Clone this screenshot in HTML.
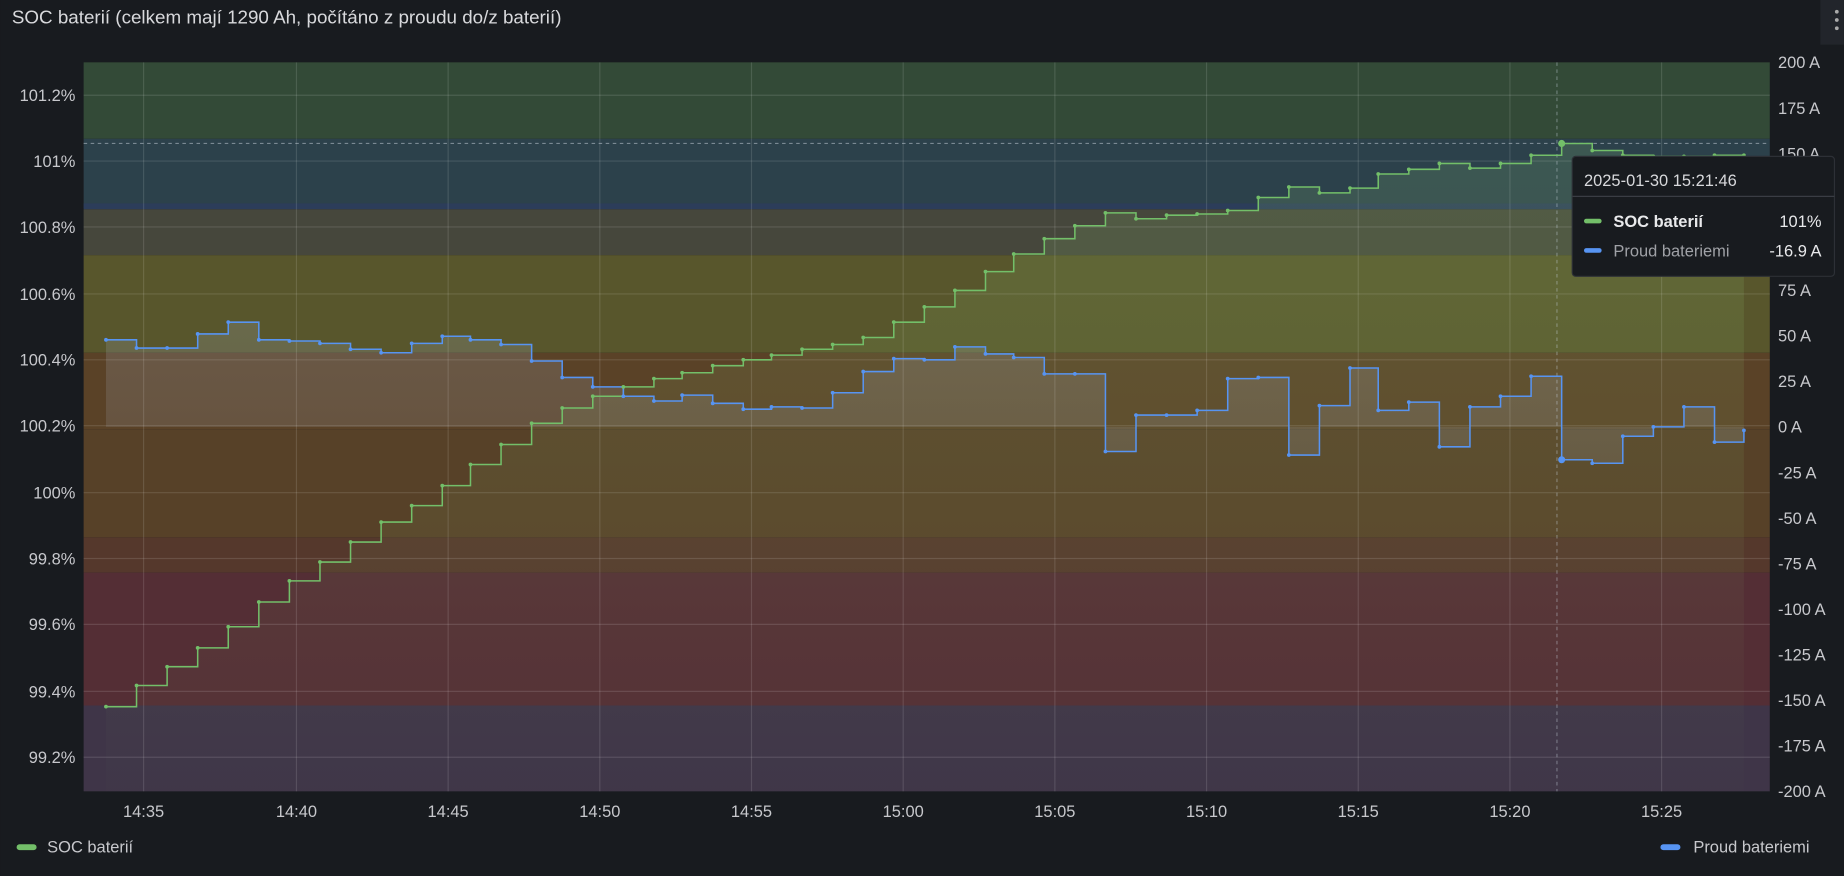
<!DOCTYPE html>
<html><head><meta charset="utf-8"><style>
html,body{margin:0;padding:0;background:#181b1f;}
svg{display:block;}
text{font-family:"Liberation Sans",sans-serif;}
</style></head><body>
<svg id="s" width="1844" height="876" viewBox="0 0 1568 745" xmlns="http://www.w3.org/2000/svg">
<defs>
<linearGradient id="gg" gradientUnits="userSpaceOnUse" x1="0" y1="120" x2="0" y2="673"><stop offset="0" stop-color="rgb(150,210,120)" stop-opacity="0.16"/><stop offset="1" stop-color="rgb(150,210,120)" stop-opacity="0.01"/></linearGradient>
<linearGradient id="bg" gradientUnits="userSpaceOnUse" x1="0" y1="270" x2="0" y2="400"><stop offset="0" stop-color="rgb(175,185,205)" stop-opacity="0.2"/><stop offset="1" stop-color="rgb(175,185,205)" stop-opacity="0.13"/></linearGradient>
</defs>
<rect width="1568" height="745" fill="#181b1f"/>
<text x="10" y="20" fill="#d8d9dc" font-size="16">SOC baterií (celkem mají 1290 Ah, počítáno z proudu do/z baterií)</text>
<rect x="1548" y="0" width="20" height="38" fill="#22252b"/>
<circle cx="1562" cy="10" r="1.6" fill="#aaa"/><circle cx="1562" cy="17" r="1.6" fill="#aaa"/><circle cx="1562" cy="24" r="1.6" fill="#aaa"/>
<rect x="71" y="53" width="1434" height="65" fill="#334a37"/>
<rect x="71" y="118" width="1434" height="59" fill="#2c414b"/>
<rect x="71" y="173" width="1434" height="5" fill="#2c3d5a"/>
<rect x="71" y="178" width="1434" height="39" fill="#46473c"/>
<rect x="71" y="217" width="1434" height="83" fill="#58562c"/>
<rect x="71" y="300" width="1434" height="65" fill="#5a4227"/>
<rect x="71" y="365" width="1434" height="92" fill="#574128"/>
<rect x="71" y="457" width="1434" height="30" fill="#55382c"/>
<rect x="71" y="487" width="1434" height="113" fill="#542e35"/>
<rect x="71" y="600" width="1434" height="73" fill="#3f3548"/>
<g id="fills"></g>
<g id="grid" stroke="rgba(255,255,255,0.12)" stroke-width="1"></g>
<line x1="71" y1="122" x2="1505" y2="122" stroke="rgba(200,210,220,0.5)" stroke-dasharray="3,3"/>
<line x1="1324" y1="53" x2="1324" y2="673" stroke="rgba(200,210,220,0.4)" stroke-dasharray="3,3"/>
<g id="lines"></g>
<g id="labels" fill="#c7c8cc" font-size="14"></g>
<rect x="1337" y="133" width="223" height="102" rx="3" fill="#181b1f" stroke="#2d3036"/>
<text x="1347" y="158" fill="#d8d9dc" font-size="14">2025-01-30 15:21:46</text>
<line x1="1337" y1="167" x2="1560" y2="167" stroke="#3a3d44"/>
<rect x="1347" y="186" width="15" height="4" rx="2" fill="#73bf69"/>
<text x="1372" y="193" fill="#e8e9eb" font-size="14" font-weight="bold">SOC baterií</text>
<text x="1549" y="193" fill="#e8e9eb" font-size="14" text-anchor="end">101%</text>
<rect x="1347" y="211" width="15" height="4" rx="2" fill="#5794f2"/>
<text x="1372" y="218" fill="#9fa1a6" font-size="14">Proud bateriemi</text>
<text x="1549" y="218" fill="#e8e9eb" font-size="14" text-anchor="end">-16.9 A</text>
<rect x="14" y="718" width="17" height="5" rx="2.5" fill="#73bf69"/>
<text x="40" y="725" fill="#c7c8cc" font-size="14">SOC baterií</text>
<rect x="1412" y="718" width="17" height="5" rx="2.5" fill="#5794f2"/>
<text x="1440" y="725" fill="#c7c8cc" font-size="14">Proud bateriemi</text>
</svg>
<script>
var NS="http://www.w3.org/2000/svg";
function el(p,t,a,txt){var e=document.createElementNS(NS,t);for(var k in a)e.setAttribute(k,a[k]);if(txt)e.textContent=txt;document.getElementById(p).appendChild(e);return e;}
var ly=[81,137,193,250,306,362,419,475,531,588,644];
var ll=["101.2%","101%","100.8%","100.6%","100.4%","100.2%","100%","99.8%","99.6%","99.4%","99.2%"];
ly.forEach(function(y,i){el("grid","line",{x1:71,x2:1505,y1:y,y2:y});el("labels","text",{x:64,y:y+5,"text-anchor":"end"},ll[i]);});
var tx=[122,252,381,510,639,768,897,1026,1155,1284,1413];
var tl=["14:35","14:40","14:45","14:50","14:55","15:00","15:05","15:10","15:15","15:20","15:25"];
tx.forEach(function(x,i){el("grid","line",{x1:x,x2:x,y1:53,y2:673});el("labels","text",{x:x,y:695,"text-anchor":"middle"},tl[i]);});
for(var i=0;i<=16;i++){var v=200-25*i,y=53+i*38.75;el("labels","text",{x:1512,y:y+5},v+" A");}
var G=[[90,601],[116,583],[142,567],[168,551],[194,533],[220,512],[246,494],[272,478],[298,461],[324,444],[350,430],[376,413],[400,395],[426,378],[452,360],[478,347],[504,337],[530,329],[556,322],[580,317],[606,311],[632,306],[656,302],[682,297],[708,293],[734,287],[760,274],[786,261],[812,247],[838,231],[862,216],[888,203],[914,192],[940,181],[966,186],[992,183],[1018,182],[1044,179],[1070,168],[1096,159],[1122,164],[1148,160],[1172,148],[1198,144],[1224,139],[1250,143],[1276,139],[1302,132],[1328,122],[1354,128],[1380,132],[1406,133],[1432,133],[1458,132],[1483,132]];
var B=[[90,289],[116,296],[142,296],[168,284],[194,274],[220,289],[246,290],[272,292],[298,297],[324,300],[350,292],[376,286],[400,289],[426,293],[452,307],[478,321],[504,329],[530,337],[556,341],[580,336],[606,343],[632,348],[656,346],[682,347],[708,334],[734,316],[760,305],[786,306],[812,295],[838,301],[862,304],[888,318],[914,318],[940,384],[966,353],[992,353],[1018,349],[1044,322],[1070,321],[1096,387],[1122,345],[1148,313],[1172,349],[1198,342],[1224,380],[1250,346],[1276,337],[1302,320],[1328,391],[1354,394],[1380,371],[1406,363],[1432,346],[1458,376],[1483,366]];
function step(P){var d="M"+P[0][0]+","+P[0][1];for(var i=1;i<P.length;i++){d+=" H"+P[i][0]+" V"+P[i][1];}return d;}
var gd=step(G),bd=step(B);
el("fills","path",{d:gd+" V673 H90 Z",fill:"url(#gg)"});
el("fills","path",{d:bd+" V363 H90 Z",fill:"url(#bg)"});
el("lines","path",{d:gd,fill:"none",stroke:"#73bf69","stroke-width":1.3});
el("lines","path",{d:bd,fill:"none",stroke:"#5794f2","stroke-width":1.3});
G.forEach(function(p){el("lines","circle",{cx:p[0],cy:p[1],r:1.6,fill:"#73bf69"});});
B.forEach(function(p){el("lines","circle",{cx:p[0],cy:p[1],r:1.6,fill:"#5794f2"});});
el("lines","circle",{cx:1328,cy:122,r:3,fill:"#73bf69"});
el("lines","circle",{cx:1328,cy:391,r:3,fill:"#5794f2"});
</script>
</body></html>
